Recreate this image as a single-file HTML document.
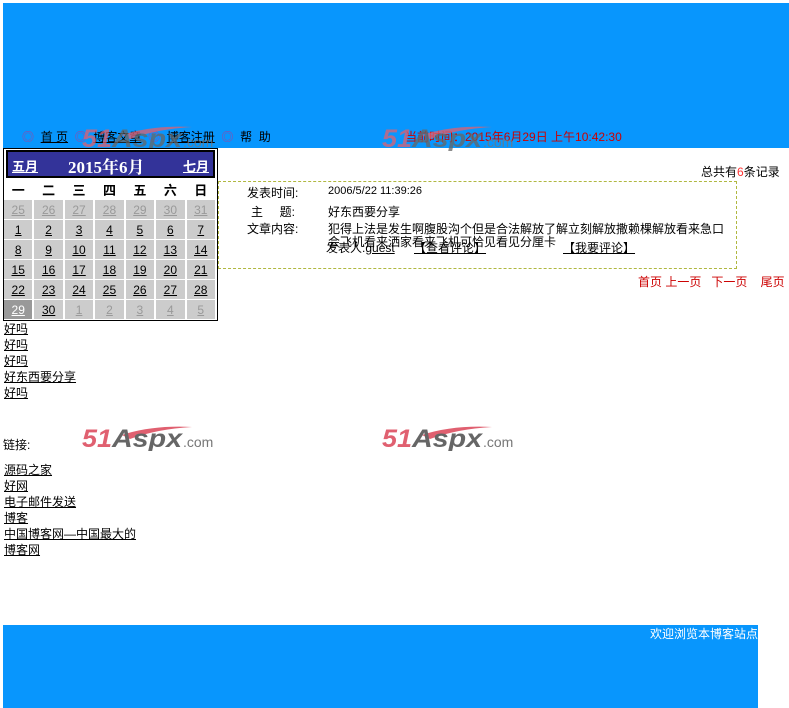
<!DOCTYPE html>
<html><head><meta charset="utf-8"><style>
*{margin:0;padding:0}
body{width:789px;height:708px;background:#fff;position:relative;overflow:hidden;font-family:"Liberation Sans","Noto Sans CJK SC","WenQuanYi Zen Hei",sans-serif;font-size:12px;color:#000}
.a{position:absolute;white-space:nowrap}
a,u{color:#000;text-decoration:underline}
.logo{position:absolute;width:136px;height:26px}
table.cal{position:absolute;left:3px;top:148px;width:215px;border:1px solid #000;border-collapse:separate;border-spacing:0;background:#fff}
.cal td{text-align:center;font-size:12px;height:19px;border-right:2px solid #fff;border-bottom:1px solid #fff;background:#ccc}
.cal td.o{color:#999}
.cal td.o u{color:#999}
.cal tr.h td{background:#fff;font-weight:bold;font-size:13px;height:19px}
</style></head><body>
<div class="a" style="left:3px;top:3px;width:786px;height:145px;background:#0896fd"></div>
<div class="a" style="left:22px;top:128px;font-size:12px">
<span style="color:#a040a0">◎</span>&nbsp;&nbsp;<u>首&nbsp;页</u>&nbsp;&nbsp;<span style="color:#a040a0">◎</span>&nbsp;&nbsp;<u>博客文章</u>&nbsp;&nbsp;<span style="color:#a040a0">◎</span>&nbsp;&nbsp;<u>博客注册</u>&nbsp;&nbsp;<span style="color:#a040a0">◎</span>&nbsp;&nbsp;帮&nbsp;&nbsp;助</div>
<div class="a" style="left:405px;top:128px;color:#c00">当前时间：2015年6月29日 上午10:42:30</div>
<svg class="logo" style="left:82px;top:125px;opacity:.75" viewBox="0 0 136 26"><path d="M40 10 Q70 0 110 2 Q75 4 48 14Z" fill="#e06070"/><text x="0" y="22" font-family="Liberation Sans" font-weight="bold" font-style="italic" font-size="25" fill="#e06070" textLength="30" lengthAdjust="spacingAndGlyphs">51</text><text x="30" y="22" font-family="Liberation Sans" font-weight="bold" font-style="italic" font-size="25" fill="#666" textLength="70" lengthAdjust="spacingAndGlyphs">Aspx</text><text x="101" y="22" font-family="Liberation Sans" font-size="14" fill="#777">.com</text></svg>
<svg class="logo" style="left:382px;top:125px;opacity:.75" viewBox="0 0 136 26"><path d="M40 10 Q70 0 110 2 Q75 4 48 14Z" fill="#e06070"/><text x="0" y="22" font-family="Liberation Sans" font-weight="bold" font-style="italic" font-size="25" fill="#e06070" textLength="30" lengthAdjust="spacingAndGlyphs">51</text><text x="30" y="22" font-family="Liberation Sans" font-weight="bold" font-style="italic" font-size="25" fill="#666" textLength="70" lengthAdjust="spacingAndGlyphs">Aspx</text><text x="101" y="22" font-family="Liberation Sans" font-size="14" fill="#777">.com</text></svg>
<svg class="logo" style="left:82px;top:425px" viewBox="0 0 136 26"><path d="M40 10 Q70 0 110 2 Q75 4 48 14Z" fill="#e06070"/><text x="0" y="22" font-family="Liberation Sans" font-weight="bold" font-style="italic" font-size="25" fill="#e06070" textLength="30" lengthAdjust="spacingAndGlyphs">51</text><text x="30" y="22" font-family="Liberation Sans" font-weight="bold" font-style="italic" font-size="25" fill="#666" textLength="70" lengthAdjust="spacingAndGlyphs">Aspx</text><text x="101" y="22" font-family="Liberation Sans" font-size="14" fill="#777">.com</text></svg>
<svg class="logo" style="left:382px;top:425px" viewBox="0 0 136 26"><path d="M40 10 Q70 0 110 2 Q75 4 48 14Z" fill="#e06070"/><text x="0" y="22" font-family="Liberation Sans" font-weight="bold" font-style="italic" font-size="25" fill="#e06070" textLength="30" lengthAdjust="spacingAndGlyphs">51</text><text x="30" y="22" font-family="Liberation Sans" font-weight="bold" font-style="italic" font-size="25" fill="#666" textLength="70" lengthAdjust="spacingAndGlyphs">Aspx</text><text x="101" y="22" font-family="Liberation Sans" font-size="14" fill="#777">.com</text></svg>

<table class="cal">
<tr><td colspan="7" style="background:#fff;padding:1px 2px 2px;border:none;height:auto"><div style="background:#333399;border:2px solid #000;height:24px;position:relative;color:#fff;font-weight:bold">
<span class="a" style="left:4px;top:4px;font-size:13px;text-decoration:underline">五月</span>
<span class="a" style="left:60px;top:1px;font-size:17px;font-family:'Liberation Serif','Noto Serif CJK SC',serif">2015年6月</span>
<span class="a" style="right:4px;top:4px;font-size:13px;text-decoration:underline">七月</span></div></td></tr>
<tr class="h"><td>一</td><td>二</td><td>三</td><td>四</td><td>五</td><td>六</td><td>日</td></tr>
<tr><td class="o"><u>25</u></td><td class="o"><u>26</u></td><td class="o"><u>27</u></td><td class="o"><u>28</u></td><td class="o"><u>29</u></td><td class="o"><u>30</u></td><td class="o"><u>31</u></td></tr>
<tr><td><u>1</u></td><td><u>2</u></td><td><u>3</u></td><td><u>4</u></td><td><u>5</u></td><td><u>6</u></td><td><u>7</u></td></tr>
<tr><td><u>8</u></td><td><u>9</u></td><td><u>10</u></td><td><u>11</u></td><td><u>12</u></td><td><u>13</u></td><td><u>14</u></td></tr>
<tr><td><u>15</u></td><td><u>16</u></td><td><u>17</u></td><td><u>18</u></td><td><u>19</u></td><td><u>20</u></td><td><u>21</u></td></tr>
<tr><td><u>22</u></td><td><u>23</u></td><td><u>24</u></td><td><u>25</u></td><td><u>26</u></td><td><u>27</u></td><td><u>28</u></td></tr>
<tr><td style="background:#999"><u style="color:#fff">29</u></td><td><u>30</u></td><td class="o"><u>1</u></td><td class="o"><u>2</u></td><td class="o"><u>3</u></td><td class="o"><u>4</u></td><td class="o"><u>5</u></td></tr>
</table>

<div class="a" style="left:701px;top:163px">总共有<span style="color:#f33">6</span>条记录</div>
<div class="a" style="left:218px;top:181px;width:517px;height:86px;border:1px dashed #b0b840"></div>
<div class="a" style="left:247px;top:184px">发表时间:</div>
<div class="a" style="left:328px;top:185px;font-size:11px">2006/5/22 11:39:26</div>
<div class="a" style="left:251px;top:203px">主&nbsp;&nbsp;&nbsp;&nbsp;&nbsp;题:</div>
<div class="a" style="left:328px;top:203px">好东西要分享</div>
<div class="a" style="left:247px;top:220px">文章内容:</div>
<div class="a" style="left:328px;top:220px">犯得上法是发生啊腹股沟个但是合法解放了解立刻解放撒赖棵解放看来急口</div>
<div class="a" style="left:328px;top:233px">会飞机看来洒家看来飞机可恰见看见分厘卡</div>
<div class="a" style="left:326px;top:239px">发表人:<u>guest</u></div>
<div class="a" style="left:414px;top:239px"><u>【查看评论】</u></div>
<div class="a" style="left:563px;top:239px"><u>【我要评论】</u></div>
<div class="a" style="left:638px;top:273px;color:#c00">首页 上一页&nbsp;&nbsp;&nbsp;下一页&nbsp;&nbsp;&nbsp;&nbsp;尾页</div>

<div class="a" style="left:4px;top:321px;line-height:16px"><u>好吗</u><br><u>好吗</u><br><u>好吗</u><br><u>好东西要分享</u><br><u>好吗</u></div>
<div class="a" style="left:3px;top:436px">链接:</div>
<div class="a" style="left:4px;top:462px;line-height:16px"><u>源码之家</u><br><u>好网</u><br><u>电子邮件发送</u><br><u>博客</u><br><u>中国博客网—中国最大的</u><br><u>博客网</u></div>

<div class="a" style="left:3px;top:625px;width:755px;height:83px;background:#0896fd"></div>
<div class="a" style="left:650px;top:625px;color:#fff">欢迎浏览本博客站点</div>
</body></html>
